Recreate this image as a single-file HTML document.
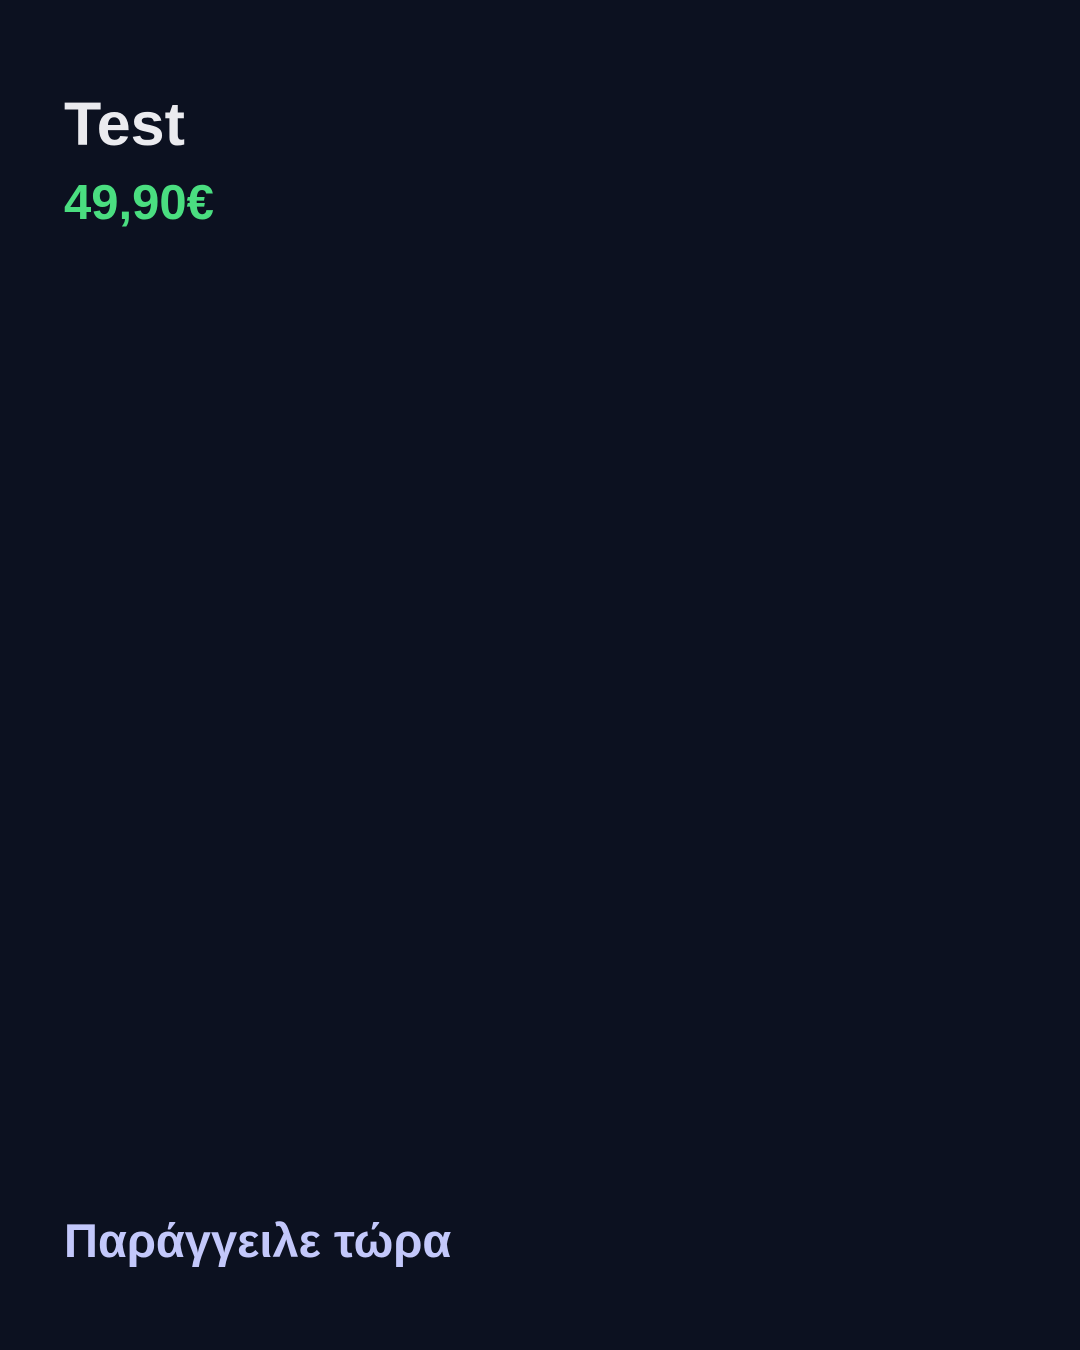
<!DOCTYPE html>
<html><head><meta charset="utf-8"><style>
html,body{margin:0;padding:0}
body{width:1080px;height:1350px;background:#0c1120;position:relative;overflow:hidden;font-family:"Liberation Sans","DejaVu Sans",sans-serif;font-weight:bold}
.t{position:absolute;left:64px;top:88px;font-size:61px;color:#ebebef;line-height:72px}
.p{position:absolute;left:64px;top:174px;font-size:49px;color:#4ade80;line-height:58px}
.b{position:absolute;left:64px;top:1211px;font-size:47px;color:#c3c8fb;line-height:60px}
</style></head><body>
<div class="t">Test</div>
<div class="p">49,90€</div>
<div class="b">Παράγγειλε τώρα</div>
</body></html>
